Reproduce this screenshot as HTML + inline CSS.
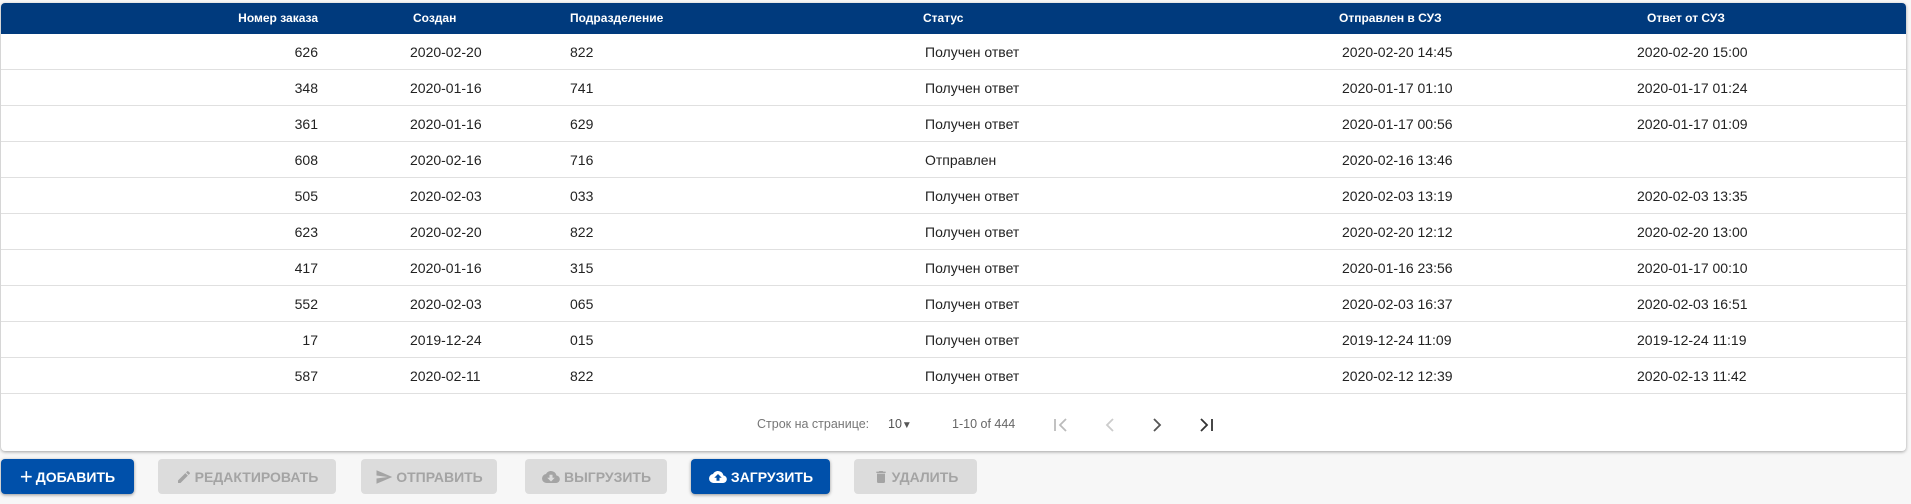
<!DOCTYPE html>
<html><head><meta charset="utf-8"><style>
*{box-sizing:border-box;margin:0;padding:0}
body{width:1911px;height:504px;background:#f7f7f7;font-family:"Liberation Sans",sans-serif;position:relative;overflow:hidden}
.card{position:absolute;left:1px;top:3px;width:1905px;height:448px;background:#fff;border-radius:4px;box-shadow:0 1px 3px rgba(0,0,0,.35);overflow:hidden}
.hdr{position:absolute;left:0;top:0;width:100%;height:31px;background:#003a7d;color:#fff;font-weight:bold;font-size:12px}
.row{position:absolute;left:0;width:100%;height:36px;border-bottom:1px solid #e0e0e0;font-size:14px;color:#222}
.c{position:absolute;top:0;line-height:36px;white-space:nowrap}
.hdr .c{line-height:31px}
.r{text-align:right}
.pg{position:absolute;top:410px;font-size:12.5px;color:#777;line-height:20px}
.btn{position:absolute;top:459px;height:35px;border-radius:4px;font-size:14px;font-weight:bold;display:flex;align-items:center;justify-content:center;gap:3px;letter-spacing:0}
.pr{background:#0050aa;color:#fff;box-shadow:0 1px 3px rgba(0,0,0,.4)}
.ds{background:#dcdcdc;color:#a4a4a4}
</style></head><body>
<div class="card">
<div class="hdr">
<div class="c r" style="right:1588px">Номер заказа</div>
<div class="c" style="left:412px">Создан</div>
<div class="c" style="left:569px">Подразделение</div>
<div class="c" style="left:922px">Статус</div>
<div class="c" style="left:1338px">Отправлен в СУЗ</div>
<div class="c" style="left:1646px">Ответ от СУЗ</div>
</div>
</div>
<div id="rows"></div>
<script>
var d=[["626","2020-02-20","822","Получен ответ","2020-02-20 14:45","2020-02-20 15:00"],
["348","2020-01-16","741","Получен ответ","2020-01-17 01:10","2020-01-17 01:24"],
["361","2020-01-16","629","Получен ответ","2020-01-17 00:56","2020-01-17 01:09"],
["608","2020-02-16","716","Отправлен","2020-02-16 13:46",""],
["505","2020-02-03","033","Получен ответ","2020-02-03 13:19","2020-02-03 13:35"],
["623","2020-02-20","822","Получен ответ","2020-02-20 12:12","2020-02-20 13:00"],
["417","2020-01-16","315","Получен ответ","2020-01-16 23:56","2020-01-17 00:10"],
["552","2020-02-03","065","Получен ответ","2020-02-03 16:37","2020-02-03 16:51"],
["17","2019-12-24","015","Получен ответ","2019-12-24 11:09","2019-12-24 11:19"],
["587","2020-02-11","822","Получен ответ","2020-02-12 12:39","2020-02-13 11:42"]];
var h="";d.forEach(function(r,i){h+='<div class="row" style="top:'+(31+36*i)+'px"><div class="c r" style="right:1588px">'+r[0]+'</div><div class="c" style="left:409px">'+r[1]+'</div><div class="c" style="left:569px">'+r[2]+'</div><div class="c" style="left:924px">'+r[3]+'</div><div class="c" style="left:1341px">'+r[4]+'</div><div class="c" style="left:1636px">'+r[5]+'</div></div>';});
document.querySelector('.card').insertAdjacentHTML('beforeend',h);
</script>
<div class="pg" style="left:757px;top:414px">Строк на странице:</div>
<div class="pg" style="left:888px;top:414px;color:#555">10<span style="font-size:10px">▼</span></div>
<div class="pg" style="left:952px;top:414px;color:#666">1-10 of 444</div>
<svg style="position:absolute;left:1052px;top:415px" width="170" height="20" viewBox="0 0 170 20">
<g fill="none" stroke-width="1.8"><path d="M3 4v12M14 4l-6 6 6 6" stroke="#bbb"/><path d="M61 4l-6 6 6 6" stroke="#ccc"/><path d="M102 4l6 6-6 6" stroke="#555"/><path d="M149 4l6 6-6 6M160 4v12" stroke="#333"/></g></svg>
<div class="btn pr" style="left:1px;width:133px"><span style="font-size:22px;font-weight:normal;line-height:1">+</span>ДОБАВИТЬ</div>
<div class="btn ds" style="left:158px;width:178px"><svg width="16" height="16" viewBox="0 0 24 24"><path fill="#a4a4a4" d="M3 17.25V21h3.75L17.8 9.94l-3.75-3.75zM20.7 7.04a1 1 0 000-1.41l-2.34-2.34a1 1 0 00-1.41 0l-1.83 1.83 3.75 3.75z"/></svg>РЕДАКТИРОВАТЬ</div>
<div class="btn ds" style="left:361px;width:136px"><svg width="18" height="18" viewBox="0 0 24 24"><path fill="#a4a4a4" d="M2 21l21-9L2 3v7l15 2-15 2z"/></svg>ОТПРАВИТЬ</div>
<div class="btn ds" style="left:525px;width:142px"><svg width="20" height="18" viewBox="0 0 24 24"><path fill="#a4a4a4" d="M19.35 10.04A7.49 7.49 0 0012 4C9.11 4 6.6 5.64 5.35 8.04A6 6 0 006 20h13a5 5 0 00.35-9.96zM17 13l-5 5-5-5h3V9h4v4z"/></svg>ВЫГРУЗИТЬ</div>
<div class="btn pr" style="left:691px;width:139px"><svg width="20" height="18" viewBox="0 0 24 24"><path fill="#fff" d="M19.35 10.04A7.49 7.49 0 0012 4C9.11 4 6.6 5.64 5.35 8.04A6 6 0 006 20h13a5 5 0 00.35-9.96zM14 13v4h-4v-4H7l5-5 5 5z"/></svg>ЗАГРУЗИТЬ</div>
<div class="btn ds" style="left:854px;width:123px"><svg width="16" height="18" viewBox="0 0 24 24"><path fill="#a4a4a4" d="M6 19a2 2 0 002 2h8a2 2 0 002-2V7H6zM19 4h-3.5l-1-1h-5l-1 1H5v2h14z"/></svg>УДАЛИТЬ</div>
</body></html>
